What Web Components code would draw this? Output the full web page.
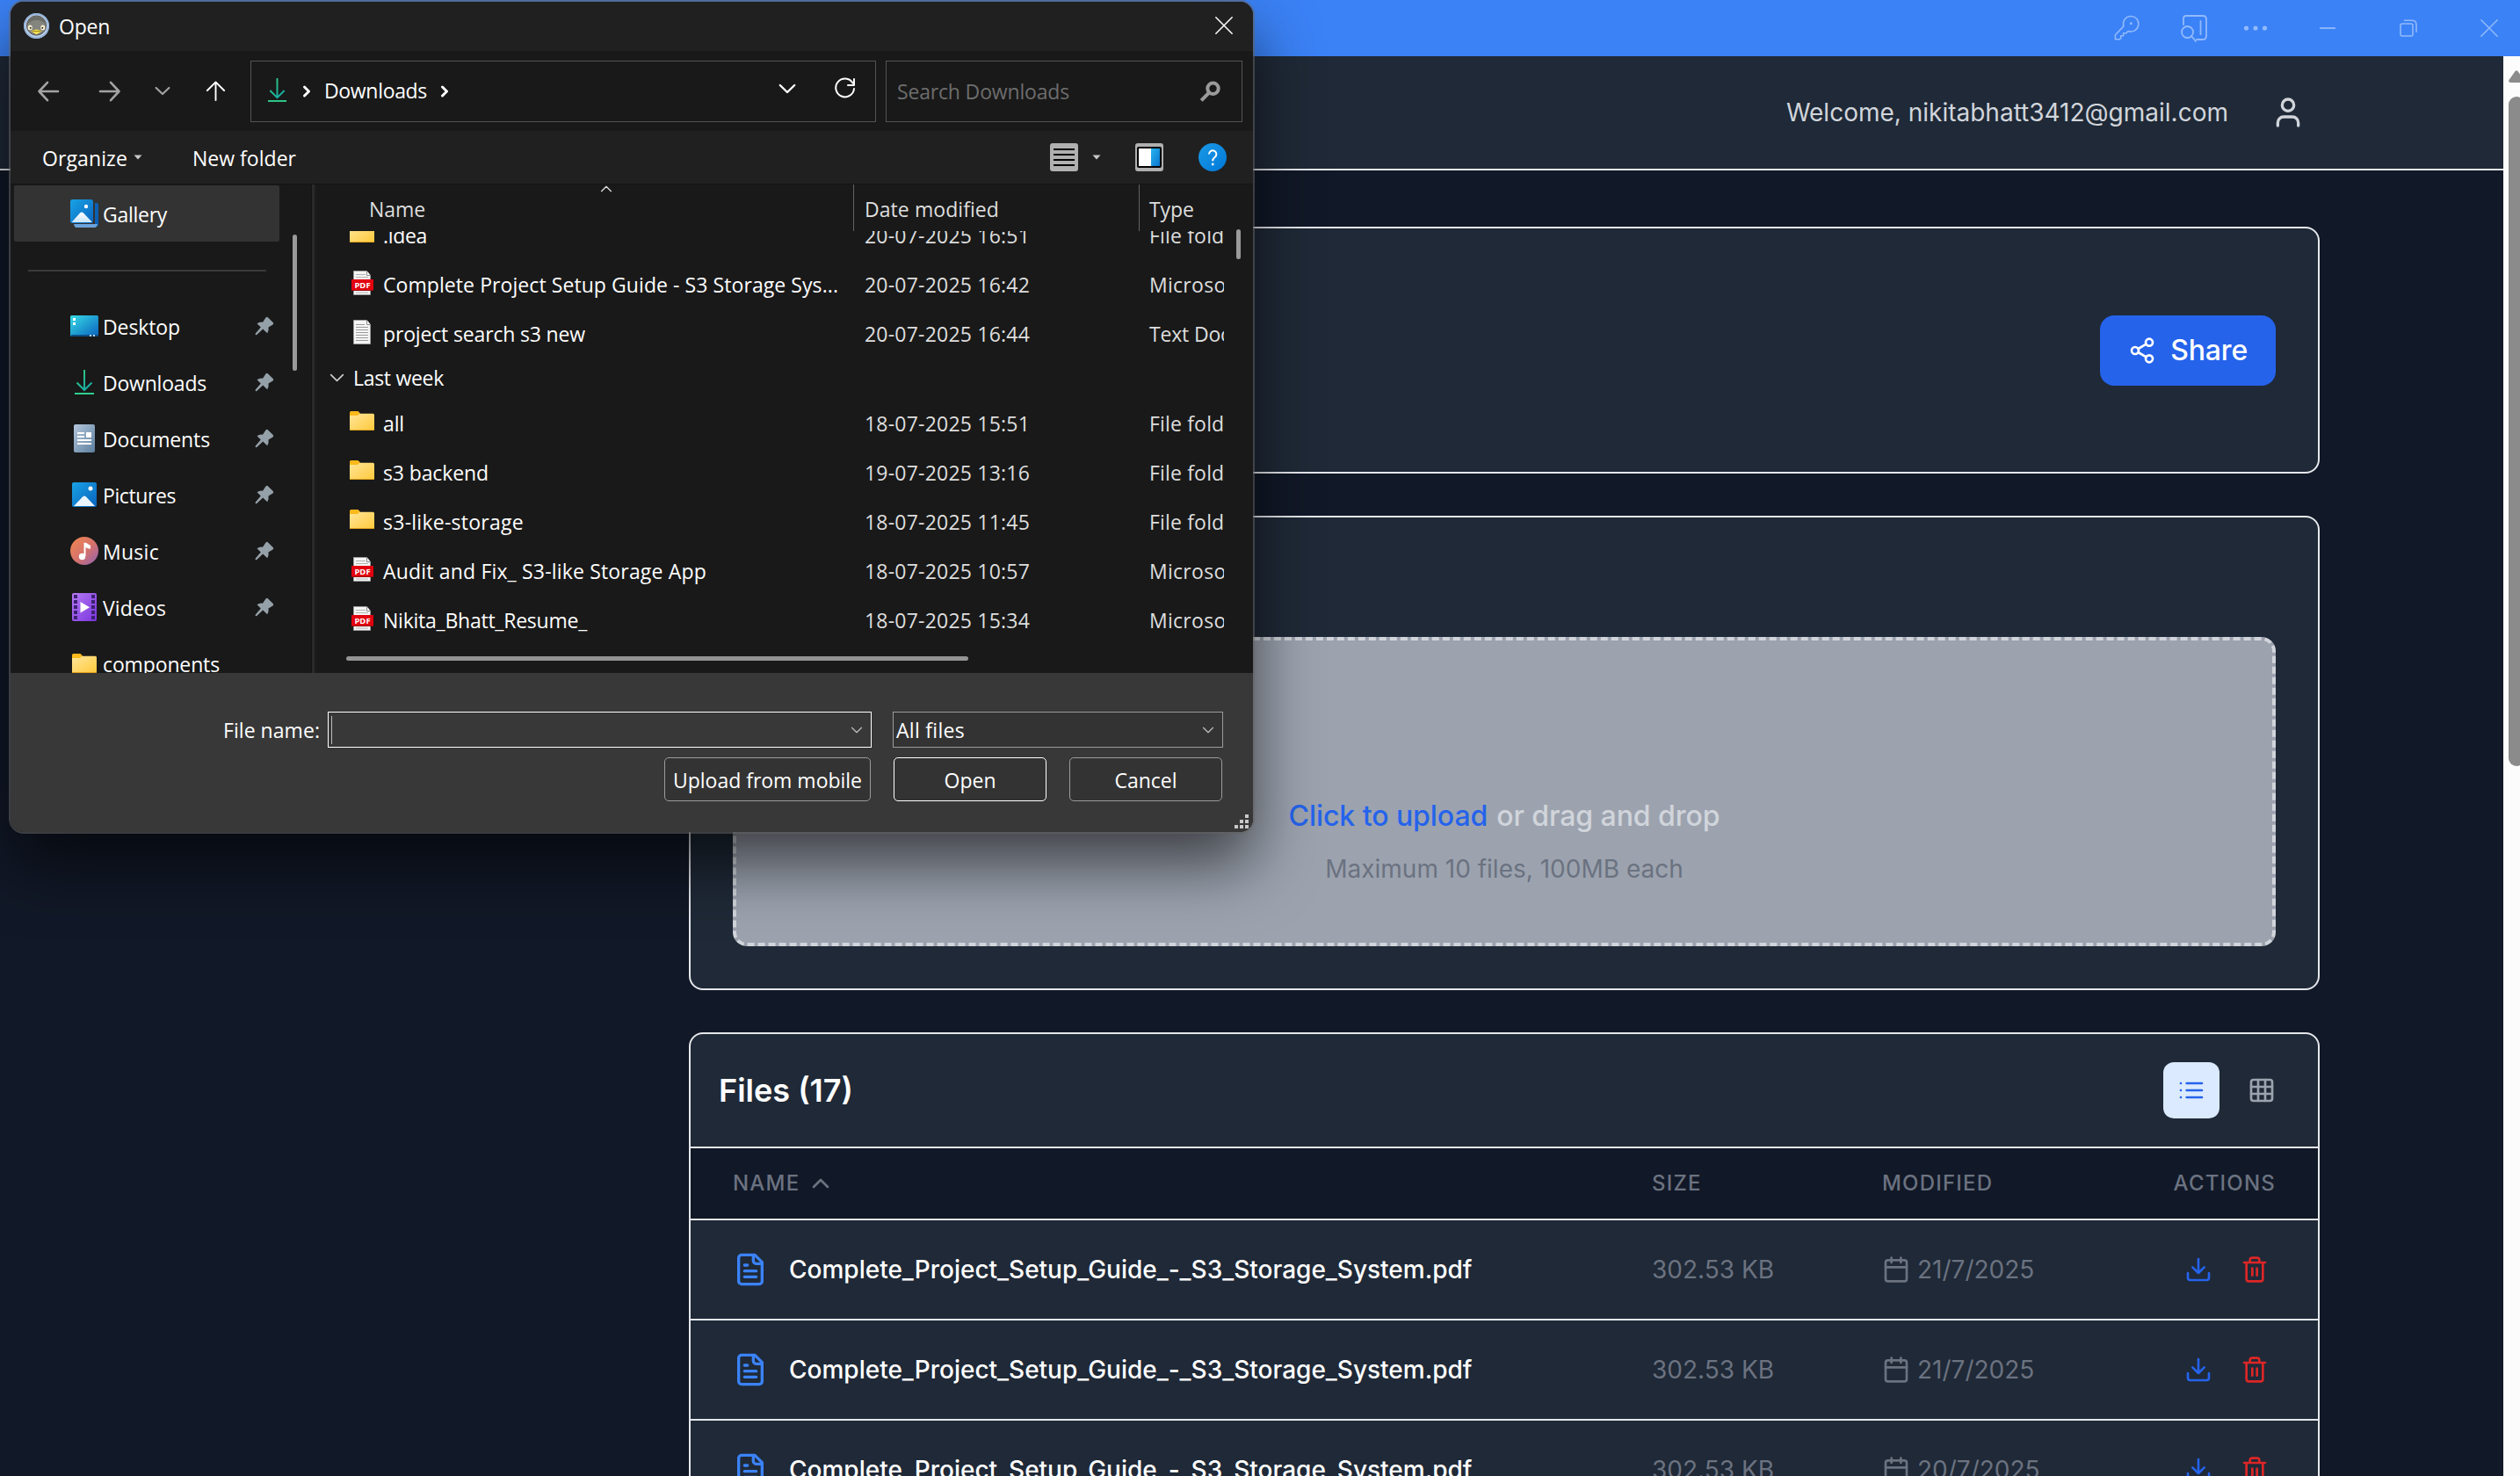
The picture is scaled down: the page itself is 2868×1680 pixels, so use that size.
<!DOCTYPE html>
<html lang="en">
<head>
<meta charset="utf-8">
<title>Storage</title>
<style>
html,body{margin:0;padding:0}
body{width:2868px;height:1680px;overflow:hidden;background:#111827;font-family:Inter,"Liberation Sans",sans-serif;color:#fff}
</style>
</head>
<body>
<storage-app></storage-app>
<open-dialog></open-dialog>
<script>
const define=(name,html,init)=>{
  const t=document.createElement('template');t.innerHTML=html;
  customElements.define(name,class extends HTMLElement{
    constructor(){super();this.attachShadow({mode:'open'}).appendChild(t.content.cloneNode(true));}
    connectedCallback(){if(init)init(this,this.shadowRoot);}
  });
};
const lucide=(body,sw=2)=>({vb:'0 0 24 24',body:`<g fill="none" stroke="currentColor" stroke-width="${sw}" stroke-linecap="round" stroke-linejoin="round">${body}</g>`});
const line=(vb,body,sw)=>({vb,body:`<g fill="none" stroke="currentColor" stroke-width="${sw}" stroke-linecap="round" stroke-linejoin="round">${body}</g>`});
const folder='<defs><linearGradient id="f" x1="0" y1="0" x2="1" y2="1"><stop offset="0" stop-color="#ffe69a"/><stop offset="1" stop-color="#ffc93a"/></linearGradient></defs><path d="M2 6.500q0-1.500 1.500-1.500h8l2.500 2.500v4h-12z" fill="#fbb91b"/><path d="M2 10h9l2.500-2.200H28.500q1.500 0 1.500 1.500V26q0 1-1.500 1h-25q-1.500 0-1.500-1z" fill="url(#f)"/><path d="M2.200 26.500h27.600" stroke="#e2a21c" stroke-width="1"/>';
const page='<path d="M6.500 2.500h15l4 5v22h-19z" fill="#f5f5f5" stroke="#9b9b9b"/><path d="M21.500 2.500v5h4" fill="#fff" stroke="#8a8a8a"/>';
const ICONS={
  user:lucide('<path d="M19 21v-2a4 4 0 0 0-4-4H9a4 4 0 0 0-4 4v2"/><circle cx="12" cy="7" r="4"/>'),
  share:lucide('<circle cx="18" cy="5" r="3"/><circle cx="6" cy="12" r="3"/><circle cx="18" cy="19" r="3"/><path d="M8.590 13.510l6.830 3.980M15.410 6.510l-6.820 3.980"/>'),
  list:lucide('<path d="M3 6h.01M3 12h.01M3 18h.01M8 6h13M8 12h13M8 18h13"/>'),
  grid:lucide('<rect x="3" y="3" width="18" height="18" rx="2"/><path d="M3 9h18M3 15h18M9 3v18M15 3v18"/>'),
  up:lucide('<path d="m18 15-6-6-6 6"/>'),
  file:lucide('<path d="M15 2H6a2 2 0 0 0-2 2v16a2 2 0 0 0 2 2h12a2 2 0 0 0 2-2V7Z"/><path d="M14 2v4a2 2 0 0 0 2 2h4M10 9H8M16 13H8M16 17H8"/>'),
  calendar:lucide('<path d="M8 2v4M16 2v4M3 10h18"/><rect x="3" y="4" width="18" height="18" rx="2"/>'),
  download:lucide('<path d="M21 15v4a2 2 0 0 1-2 2H5a2 2 0 0 1-2-2v-4M7 10l5 5 5-5M12 15V3"/>'),
  trash:lucide('<path d="M3 6h18M19 6v14a2 2 0 0 1-2 2H7a2 2 0 0 1-2-2V6M8 6V4a2 2 0 0 1 2-2h4a2 2 0 0 1 2 2v2M10 11v6M14 11v6"/>'),
  key:line('0 0 32 32','<path d="M3.500 28.500v-5l9.800-10.200a9 9 0 1 1 5.600 5.700l-2.900 2.500h-3v3h-3v3l-1.500 1.200h-4.500z"/><circle cx="22" cy="10" r="1.500" fill="currentColor" stroke="none"/>',1.6),
  tabsearch:line('0 0 32 32','<path d="M4 12V5q0-3 3-3h19q4 0 4 4v19q0 4-4 4h-7M23.500 8v15"/><circle cx="8.500" cy="20.500" r="6.500"/><path d="M13 25l5 6"/>',1.8),
  dots:{vb:'0 0 32 32',body:'<g fill="currentColor"><circle cx="5.500" cy="16" r="2.600"/><circle cx="16" cy="16" r="2.600"/><circle cx="26.500" cy="16" r="2.600"/></g>'},
  min:line('0 0 20 20','<path d="M1 10h18" stroke-linecap="butt"/>',1.8),
  restore:line('0 0 20 20','<rect x="1" y="5" width="14" height="14" rx="2"/><path d="M5.500 1.200H14q5 0 5 5v8"/>',1.6),
  close:line('0 0 20 20','<path d="M.8.8l18.400 18.400M19.200.8L.8 19.200"/>',1.5),
  back:line('0 0 24 24','<path d="M23 12H1.500M11 1.800L1.500 12 11 22.200"/>',2.6),
  fwd:line('0 0 24 24','<path d="M1 12h21.500M13 1.800L22.500 12 13 22.200"/>',2.6),
  chev:line('0 0 20 12','<path d="M1.800 2l8.200 8 8.200-8"/>',2.4),
  thin:line('0 0 20 12','<path d="M1.800 2l8.200 8 8.200-8"/>',2),
  arrowup:line('0 0 24 24','<path d="M12 23V1.500M2 11.500L12 1.500l10 10"/>',2),
  dl:{vb:'0 0 24 30',body:'<defs><linearGradient id="d" gradientUnits="userSpaceOnUse" x1="2" y1="1" x2="20" y2="26"><stop offset="0" stop-color="#33d07e"/><stop offset="1" stop-color="#12a5ab"/></linearGradient></defs><g fill="none" stroke="url(#d)" stroke-width="2"><path d="M12 1v23M3.500 15.500L12 24l8.500-8.500"/></g><path d="M1 28h22" stroke="#2fce8e" stroke-width="2"/>'},
  right:line('0 0 10 14','<path d="M2.500 2l5 5-5 5"/>',3),
  refresh:line('0 0 24 24','<path d="M20.500 5.500A10.400 10.400 0 1 0 22 12M22 1v7h-7"/>',2),
  search:line('0 0 24 24','<circle cx="15.500" cy="8.700" r="6.200"/><path d="M11 13.500L2.200 22.300" stroke-linecap="butt"/>',4),
  caret:{vb:'0 0 10 6',body:'<path d="M.5.500h9l-4.500 5z" fill="#c8c8c8"/>'},
  viewlist:{vb:'0 0 32 32',body:'<rect width="32" height="32" rx="3" fill="#b0b0b0"/><path d="M4 7h24M4 13h24M4 19h24M4 25h24" stroke="#000" stroke-width="2"/>'},
  preview:{vb:'0 0 32 32',body:'<defs><linearGradient id="p" x1="0" y1="0" x2="1" y2="1"><stop offset="0" stop-color="#27b4ef"/><stop offset="1" stop-color="#0a74cf"/></linearGradient></defs><rect width="32" height="32" rx="3" fill="#b0b0b0"/><rect x="2" y="4" width="28" height="24" rx="2" fill="#000"/><path d="M4 6h14v20H4z" fill="#fff"/><path d="M18 6h10v20H18z" fill="url(#p)"/>'},
  help:{vb:'0 0 32 32',body:'<defs><linearGradient id="h" x1="0" y1="0" x2="1" y2="1"><stop offset="0" stop-color="#1c9ae6"/><stop offset="1" stop-color="#0078d8"/></linearGradient></defs><circle cx="16" cy="16" r="16" fill="url(#h)"/><path d="M12 12.500a4.200 4.200 0 1 1 6.500 3.500q-2.300 1.700-2.300 4.200" fill="none" stroke="#fff" stroke-width="2"/><circle cx="16.200" cy="24" r="1.400" fill="#fff"/>'},
  app:{vb:'0 0 32 32',body:'<circle cx="16" cy="16" r="15" fill="#bcd2ec"/><circle cx="16" cy="16" r="14" fill="none" stroke="#8fb0d8" stroke-width="1.500"/><circle cx="16" cy="15.500" r="11.500" fill="#85857f" stroke="#555" stroke-width="1"/><path d="M6 13q10-8 20 0v-3q-10-10-20 0z" fill="#6c6c67"/><ellipse cx="8.500" cy="18" rx="2.600" ry="3" fill="#f6efcf"/><ellipse cx="23.500" cy="18" rx="2.600" ry="3" fill="#f6efcf"/><circle cx="9" cy="18.300" r="1" fill="#222"/><circle cx="23" cy="18.300" r="1" fill="#222"/><path d="M9.500 22q3.500-1.500 6.500-2 3 .5 6.500 2-3 2-6.500 4-3.500-2-6.500-4z" fill="#f3e04c"/><path d="M11 22.200h10" stroke="#8a7410" stroke-width=".8"/>'},
  gallery:{vb:'0 0 32 32',body:'<defs><linearGradient id="g" x1="0" y1="0" x2="1" y2="1"><stop offset="0" stop-color="#18a2e4"/><stop offset="1" stop-color="#0b66c0"/></linearGradient><linearGradient id="m" x1="0" y1="0" x2="0" y2="1"><stop offset="0" stop-color="#fff"/><stop offset="1" stop-color="#c9e6fb"/></linearGradient></defs><path d="M28 4h2q2 0 2 2v22q0 3-3 3h-1z" fill="#0c5fb4"/><path d="M4 28h27q-1 4-3 4H6.500q-1.500 0-2.500-4z" fill="#6aa3dc"/><rect width="26" height="27" rx="2.500" fill="url(#g)"/><path d="M1.500 26L11 15.500q2-2 4 0L25 26z" fill="url(#m)"/><circle cx="18" cy="8" r="2.200" fill="#fff"/>'},
  desktop:{vb:'0 0 32 32',body:'<defs><linearGradient id="k" x1="0" y1="0" x2="1" y2="1"><stop offset="0" stop-color="#37dbe6"/><stop offset="1" stop-color="#0a62bd"/></linearGradient></defs><rect y="4" width="32" height="24" rx="1.500" fill="url(#k)"/><path d="M1 26h31v1q0 1-1 1H1z" fill="#0b4f86"/><path d="M3 7h3v3H3zM3 12h3v3H3z" fill="#fff"/><path d="M22 26h2v2h-2zM26 26h2v2h-2z" fill="#b9d5ee"/>'},
  downloads:{vb:'-4 -1 32 32',body:''},
  documents:{vb:'0 0 32 32',body:'<defs><linearGradient id="o" x1="0" y1="0" x2="1" y2="1"><stop offset="0" stop-color="#b4c7dc"/><stop offset="1" stop-color="#5d7f9f"/></linearGradient></defs><rect x="4" width="24" height="32" rx="2" fill="url(#o)"/><path d="M8 9h8v2H8zM8 13h8v2H8zM18 9h6v6h-6zM8 17h16v2H8zM8 21h16v2H8z" fill="#fff"/>'},
  pictures:{vb:'0 0 32 32',body:'<defs><linearGradient id="q" x1="0" y1="0" x2="1" y2="1"><stop offset="0" stop-color="#18a2e4"/><stop offset="1" stop-color="#0a62bd"/></linearGradient></defs><rect x="2" y="2" width="28" height="28" rx="2" fill="url(#q)"/><path d="M4 29L14 18.500q2-2 4 0L28 29z" fill="#eaf5fd"/><circle cx="23" cy="9" r="2.500" fill="#fff"/>'},
  music:{vb:'0 0 32 32',body:'<defs><linearGradient id="u" x1="0" y1="0" x2="1" y2="1"><stop offset="0" stop-color="#f2884f"/><stop offset=".55" stop-color="#d4716d"/><stop offset="1" stop-color="#8f62b8"/></linearGradient></defs><circle cx="16" cy="16" r="16" fill="url(#u)"/><circle cx="13.500" cy="22.500" r="3.700" fill="#fff"/><path d="M15.500 22V6.500q3 0 4.500 1.500t3 1.800v4q-3 0-5.500-1.800V22z" fill="#fff"/>'},
  videos:{vb:'0 0 32 32',body:'<defs><linearGradient id="v" x1="0" y1="0" x2="1" y2="1"><stop offset="0" stop-color="#b579f4"/><stop offset="1" stop-color="#7a35dd"/></linearGradient></defs><rect x="2" width="28" height="32" rx="2" fill="url(#v)"/><path d="M4 2h4v4H4zM4 8h4v4H4zM4 14h4v4H4zM4 20h4v4H4zM4 26h4v4H4zM24 2h4v4h-4zM24 8h4v4h-4zM24 14h4v4h-4zM24 20h4v4h-4zM24 26h4v4h-4z" fill="#3d2170"/><path d="M11.500 10v12.500L22 16.200z" fill="#fff"/>'},
  folder:{vb:'0 0 32 32',body:folder},
  pdf:{vb:'0 0 32 32',body:page+'<path d="M9 6.500h11M9 9.500h14M9 27h14" stroke="#b4b4b4"/><rect x="4" y="12" width="25" height="13" fill="#e2000f"/><path d="M4 24.500h25" stroke="#9c0a10"/><text x="16.500" y="22" text-anchor="middle" font-family="Open Sans,sans-serif" font-weight="700" font-size="9.500" fill="#fff">PDF</text>'},
  txt:{vb:'0 0 32 32',body:page+'<path d="M9 7.500h10M9 10.500h14M9 13.500h14M9 16.500h14M9 19.500h14M9 22.500h14M9 25.500h14" stroke="#9a9a9a"/>'},
  pin:{vb:'0 0 22 22',body:'<path d="M12.500 1.500q1.300-1.300 2.600 0l5.600 5.600q1.300 1.300-.2 2.500l-5 3q.8 3.600-1.300 6.600l-5-4.800L2 21.200 .6 21l.2-1.600 6-6.800L2.500 8.200q3.200-2.200 6.500-1.500z" fill="#95a1a9"/>'}
};
ICONS.downloads.body=ICONS.dl.body;
define('ui-icon','<style>:host{display:block;flex:none}svg{display:block;width:100%;height:100%;overflow:visible}</style><svg></svg>',(el,r)=>{
  const i=ICONS[el.getAttribute('name')],s=r.querySelector('svg');
  el.style.width=el.getAttribute('w')+'px';el.style.height=(el.getAttribute('h')||el.getAttribute('w'))+'px';
  s.setAttribute('viewBox',i.vb);s.innerHTML=i.body;
});
/* Text that tracks itself to a preferred width */
define('fit-text','<style>:host{display:block;flex:none;white-space:nowrap}span{display:inline-block;white-space:pre}</style><span></span>',(el,r)=>{
  const s=r.querySelector('span');s.textContent=el.getAttribute('text');
  const w=+el.getAttribute('w');if(!w)return;
  const n=s.textContent.length,nat=s.getBoundingClientRect().width;
  if(nat){s.style.letterSpacing=((w-nat)/n).toFixed(3)+'px';}
});

define('title-bar',`<style>:host{display:flex;flex:none;height:64px;background:#3b82f6;color:#92bafb;align-items:center;justify-content:flex-end;box-sizing:border-box;padding-right:25px}
.a{margin-right:46px}.b{margin-right:38px}.c{margin-right:56px}.d{margin-right:72px}</style>
<ui-icon class="a" name="key" w="31"></ui-icon><ui-icon class="b" name="tabsearch" w="32"></ui-icon><ui-icon class="c" name="dots" w="32"></ui-icon><ui-icon class="d" name="min" w="20"></ui-icon><ui-icon class="d" name="restore" w="20"></ui-icon><ui-icon name="close" w="20"></ui-icon>`);
define('app-header',`<style>:host{display:flex;flex:none;height:128px;background:#1f2937;border-bottom:2px solid #e5e7eb;align-items:center;justify-content:flex-end;gap:48px;padding-right:225px;color:#d1d5db;font-size:28px}</style>
<fit-text text="Welcome, nikitabhatt3412@gmail.com"></fit-text><ui-icon name="user" w="40"></ui-icon>`);
define('surface-card',`<style>:host{display:flex;flex-direction:column;box-sizing:border-box;width:1856px;border:2px solid #e5e7eb;border-radius:16px;background:#1f2937;overflow:hidden;flex:none}</style><slot></slot>`);
define('share-button',`<style>:host{display:flex;align-items:center;gap:16px;height:80px;padding:0 32px;border-radius:16px;background:#2563eb;color:#fff;font-size:32px;font-weight:500;letter-spacing:-.2px}</style><ui-icon name="share" w="32"></ui-icon><slot></slot>`);
define('upload-zone',`<style>:host{display:flex;flex-direction:column;justify-content:flex-end;align-items:center;box-sizing:border-box;height:352px;border:4px dashed #d1d5db;border-radius:16px;background:#9ca3af;padding-bottom:64px}
.t{display:flex;font-size:32px;line-height:48px;color:#d1d5db;margin-bottom:16px;gap:10px;font-weight:500;letter-spacing:-.06px}.t b{font-weight:500;color:#2563eb}.s{font-size:28px;line-height:40px;color:#6b7280}</style>
<div class="t"><b>Click to upload</b><span>or drag and drop</span></div><div class="s">Maximum 10 files, 100MB each</div>`);
define('file-row',`<style>:host{display:grid;grid-template-columns:1046px 262px 1fr auto;align-items:center;height:112px;padding:0 48px;border-bottom:2px solid #e5e7eb;font-size:28px;color:#6b7280}
.n{display:flex;align-items:center;gap:24px;color:#fff;font-weight:500}.n ui-icon{color:#3b82f6}.m{display:flex;align-items:center;gap:8px}.x{display:flex;gap:32px;padding:0 8px}</style>
<div class="n"><ui-icon name="file" w="40"></ui-icon><slot name="name"></slot></div><slot name="size"></slot><div class="m"><ui-icon name="calendar" w="32"></ui-icon><slot name="date"></slot></div><div class="x"><ui-icon name="download" w="32" style="color:#2563eb"></ui-icon><ui-icon name="trash" w="32" style="color:#dc2626"></ui-icon></div>`);
define('file-table',`<style>:host{display:block}
.h{display:flex;align-items:center;height:128px;padding:0 32px;border-bottom:2px solid #e5e7eb;gap:16px}.h h3{margin:0 auto 0 0;font-size:36px;font-weight:600}
.b{display:flex;width:64px;height:64px;align-items:center;justify-content:center;border-radius:12px;color:#9ca3af}.on{background:#dbeafe;color:#2563eb}
.th{display:grid;grid-template-columns:1046px 262px 1fr auto;align-items:center;height:80px;padding:0 48px;background:#111827;border-bottom:2px solid #e5e7eb;color:#6b7280;font-size:24px;font-weight:500;letter-spacing:1.2px;line-height:32px}
.th div{display:flex;gap:8px;align-items:center}</style>
<div class="h"><h3>Files (17)</h3><div class="b on"><ui-icon name="list" w="32"></ui-icon></div><div class="b"><ui-icon name="grid" w="32"></ui-icon></div></div>
<div class="th"><div>NAME<ui-icon name="up" w="32"></ui-icon></div><span>SIZE</span><span>MODIFIED</span><span>ACTIONS</span></div><div id="rows"></div>`,(el,r)=>{
  r.querySelector('#rows').innerHTML=['21/7/2025','21/7/2025','20/7/2025'].map(d=>`<file-row><span slot="name">Complete_Project_Setup_Guide_-_S3_Storage_System.pdf</span><span slot="size">302.53 KB</span><span slot="date">${d}</span></file-row>`).join('');
});
define('page-scrollbar',`<style>:host{display:flex;flex-direction:column;width:19px;background:#fcfcfc;flex:none;overflow:hidden;padding-top:16px;box-sizing:border-box}svg{display:block;margin-left:6px;flex:none}.t{margin:16px 0 0 6px;width:18px;height:762px;border-radius:9px;background:#8b8b8b;flex:none}</style>
<svg width="18" height="14"><path d="M7.500 1q1.500-1.500 3 0l7 10q1 3-2 3h-13q-3 0-2-3z" fill="#8b8b8b"/></svg><div class="t"></div>`);
define('storage-app',`<style>:host{display:flex;flex-direction:column;width:2868px;height:1680px;overflow:hidden}
.w{display:flex;flex:1;min-height:0}.p{flex:1;display:flex;flex-direction:column;background:#111827;overflow:hidden}
main{display:flex;flex:none;flex-direction:column;gap:48px;padding:64px 0 0 784px}
.s{height:277px;display:flex;align-items:center;justify-content:flex-end;padding-right:48px}.u{height:536px;display:flex;flex-direction:column;justify-content:flex-end;box-sizing:border-box;padding:0 48px 48px}.f{height:700px}</style>
<title-bar></title-bar><div class="w"><div class="p"><app-header></app-header><main>
<surface-card><div class="s"><share-button>Share</share-button></div></surface-card>
<surface-card><div class="u"><upload-zone></upload-zone></div></surface-card>
<surface-card><div class="f"><file-table></file-table></div></surface-card></main></div><page-scrollbar></page-scrollbar></div>`);

/* File picker */
define('side-item',`<style>:host{display:flex;align-items:center;box-sizing:border-box;width:302px;height:64px;padding:0 6px 0 64px;gap:5px;flex:none}:host([on]){background:#333;border-radius:2px}.i{margin-bottom:2px}:host([on]) .i{margin:0}:host([on]) fit-text{padding-top:1px}.p{margin:0 0 2px auto}</style>`,(el,r)=>{
  r.innerHTML+=`<ui-icon class="i" name="${el.getAttribute('icon')}" w="32"></ui-icon><fit-text text="${el.getAttribute('label')}" w="${el.getAttribute('w')}"></fit-text>`+(el.hasAttribute('pin')?'<ui-icon class="p" name="pin" w="22"></ui-icon>':'');
});
define('dir-row',`<style>:host{display:grid;grid-template-columns:624px 324px auto;height:56px;align-items:center;color:#dedede;width:1033px;overflow:hidden}.n{display:flex;align-items:center;gap:8px;padding-left:36px;color:#fff}</style>`,(el,r)=>{
  const g=k=>el.getAttribute(k),off=g('icon')=='folder'?'6px':'4px';
  r.innerHTML+=`<div class="n"><ui-icon name="${g('icon')}" w="32" style="margin-bottom:${off}"></ui-icon><fit-text text="${g('label')}" w="${g('w')}"></fit-text></div><fit-text text="${g('date')}" w="188"></fit-text><fit-text text="${g('type')}" w="${g('tw')}"></fit-text>`;
});
define('dialog-button',`<style>:host{display:flex;align-items:center;justify-content:center;box-sizing:border-box;height:50px;border:1px solid #9b9b9b;border-radius:5px;background:#333;padding-top:1px}:host([primary]){border-color:#fff}</style><slot></slot>`);
define('open-dialog',`<style>
:host{position:absolute;left:12px;top:2px;width:1414px;height:945px;display:flex;flex-direction:column;border-radius:15px;background:#191919;color:#fff;font:23px "Open Sans","Noto Sans",sans-serif;box-shadow:0 0 0 2px rgba(100,100,100,.55),0 36px 72px rgba(0,0,0,.62)}
.bar{display:flex;align-items:center;flex:none;box-sizing:border-box}
.title{height:56px;background:#202020;border-radius:15px 15px 0 0;padding:0 23px 2px 14px;gap:11px}
.title ui-icon:last-child{margin-left:auto}
.nav{height:91px;padding:0 12px 0 31px;color:#fff}.dim{color:#a3a3a3}
.box{display:flex;align-items:center;box-sizing:border-box;height:70px;border:1px solid #535353}
.addr{width:712px;padding:0 22px 0 18px;margin-left:28px}
.srch{width:406px;margin-left:auto;padding:1px 24px 0 12px;justify-content:space-between;color:#6d6d6d}
.tools{height:61px;background:#202020;border-bottom:1px solid #141414;padding:0 30px 0 36px}.tools fit-text{padding-top:2px}
.body{display:flex;height:556px;flex:none;overflow:hidden}
.side{width:306px;padding:1px 0 0 4px;box-sizing:border-box;overflow:hidden}
.sep{height:65px;display:flex;align-items:center;padding-left:16px}.sep i{width:271px;height:2px;background:#3a3a3a}
.gut{width:36px;box-sizing:border-box;padding:57px 0 0 15px}.gut i{display:block;width:5px;height:155px;border-radius:3px;background:#9a9a9a}
.split{width:6px;background:#1c1c1c;border-left:1px solid #131313;box-sizing:border-box}.split i{display:block;width:3px;height:100%;background:#2a2a2a}
.pane{width:1033px;display:flex;flex-direction:column}
.cols{display:flex;height:53px;flex:none;color:#dedede}.cols>div{box-sizing:border-box;padding-top:3px;display:flex;align-items:center}
.cols>div+div{border-left:1px solid #636363}
.rows{height:469px;overflow:hidden}.rows dir-row:first-child{margin-top:-23px}
.grp{display:flex;align-items:center;height:46px;box-sizing:border-box;padding:0 0 2px 15px;gap:10px}
.hs{padding:15px 0 0 34px}.hs i{display:block;width:708px;height:5px;border-radius:3px;background:#949494}
.vs{padding:51px 0 0 14px}.vs i{display:block;width:5px;height:34px;border-radius:3px;background:#9a9a9a}
.foot{flex:1;background:#383838;border-radius:0 0 15px 15px;display:flex;flex-direction:column;gap:11px;padding:44px 34px 0 0}
.r{display:flex;justify-content:flex-end;align-items:center}.r+.r{padding-right:1px}
.in{display:flex;align-items:center;box-sizing:border-box;height:41px}
.grip{position:absolute;right:5px;bottom:4px;display:grid;grid-template-columns:4px 4px 4px;gap:2px;direction:rtl}.grip i{width:4px;height:4px;background:#c9c9c9}
</style>
<div class="bar title"><ui-icon name="app" w="31"></ui-icon><fit-text text="Open" w="58" style="margin-left:-1px;padding-top:1px"></fit-text><ui-icon name="close" w="20"></ui-icon></div>
<div class="bar nav"><ui-icon class="dim" name="back" w="24"></ui-icon><ui-icon class="dim" name="fwd" w="24" style="margin-left:46px"></ui-icon><ui-icon class="dim" name="chev" w="18" h="11" style="margin-left:39px"></ui-icon><ui-icon name="arrowup" w="23" style="margin-left:40px"></ui-icon>
<div class="box addr"><ui-icon name="dl" w="23" h="29" style="margin-bottom:2px"></ui-icon><ui-icon name="right" w="10" h="14" style="margin-left:17px"></ui-icon><fit-text text="Downloads" w="117" style="margin-left:15px;padding-bottom:1px"></fit-text><ui-icon name="right" w="10" h="14" style="margin-left:15px"></ui-icon><ui-icon name="chev" w="20" h="12" style="margin:0 44px 6px auto"></ui-icon><ui-icon name="refresh" w="24" style="margin-bottom:6px"></ui-icon></div>
<div class="box srch"><fit-text text="Search Downloads" w="196"></fit-text><ui-icon name="search" w="24" style="color:#9a9a9a"></ui-icon></div></div>
<div class="bar tools"><fit-text text="Organize" w="97"></fit-text><ui-icon name="caret" w="10" h="6" style="margin-left:7px"></ui-icon><fit-text text="New folder" w="118" style="margin-left:57px"></fit-text><ui-icon name="viewlist" w="32" style="margin-left:auto"></ui-icon><ui-icon name="caret" w="10" h="6" style="margin-left:16px"></ui-icon><ui-icon name="preview" w="32" style="margin-left:39px"></ui-icon><ui-icon name="help" w="32" style="margin-left:40px"></ui-icon></div>
<div class="body">
<div class="side"><side-item on icon="gallery" label="Gallery" w="73"></side-item><div class="sep"><i></i></div>
<side-item pin icon="desktop" label="Desktop" w="88"></side-item><side-item pin icon="downloads" label="Downloads" w="118"></side-item><side-item pin icon="documents" label="Documents" w="122"></side-item><side-item pin icon="pictures" label="Pictures" w="83"></side-item><side-item pin icon="music" label="Music" w="64"></side-item><side-item pin icon="videos" label="Videos" w="72"></side-item><side-item icon="folder" label="components" w="133"></side-item></div>
<div class="gut"><i></i></div><div class="split"><i></i></div>
<div class="pane"><div class="cols"><div style="width:611px;padding-left:60px"><fit-text text="Name" w="64"></fit-text><ui-icon name="thin" w="14" h="8" style="transform:rotate(180deg);margin:0 0 46px 199px"></ui-icon></div><div style="width:325px;padding-left:12px"><fit-text text="Date modified" w="153"></fit-text></div><div style="flex:1;padding-left:11px"><fit-text text="Type" w="51"></fit-text></div></div>
<div class="rows">
<dir-row icon="folder" label=".idea" w="50" date="20-07-2025 16:51" type="File folder" tw="108"></dir-row>
<dir-row icon="pdf" label="Complete Project Setup Guide - S3 Storage Sys..." w="518" date="20-07-2025 16:42" type="Microsoft" tw="104"></dir-row>
<dir-row icon="txt" label="project search s3 new" w="230" date="20-07-2025 16:44" type="Text Docum" tw="127"></dir-row>
<div class="grp"><ui-icon name="thin" w="17" h="10" style="color:#ccc"></ui-icon><fit-text text="Last week" w="103"></fit-text></div>
<dir-row icon="folder" label="all" w="24" date="18-07-2025 15:51" type="File folder" tw="108"></dir-row>
<dir-row icon="folder" label="s3 backend" w="120" date="19-07-2025 13:16" type="File folder" tw="108"></dir-row>
<dir-row icon="folder" label="s3-like-storage" w="160" date="18-07-2025 11:45" type="File folder" tw="108"></dir-row>
<dir-row icon="pdf" label="Audit and Fix_ S3-like Storage App" w="368" date="18-07-2025 10:57" type="Microsoft" tw="104"></dir-row>
<dir-row icon="pdf" label="Nikita_Bhatt_Resume_" w="232" date="18-07-2025 15:34" type="Microsoft" tw="104"></dir-row>
</div><div class="hs"><i></i></div></div><div class="vs"><i></i></div></div>
<div class="foot"><div class="r"><fit-text text="File name:" w="110"></fit-text><div class="in" style="width:619px;border:1px solid #fff;margin:0 24px 0 9px;padding:0 9px 0 3px;justify-content:space-between"><i style="width:1px;height:32px;background:#bbb"></i><ui-icon name="thin" w="14" h="8" style="color:#bbb"></ui-icon></div><div class="in" style="width:376px;border:1px solid #9b9b9b;background:#333;padding:0 9px 0 3px;justify-content:space-between"><fit-text text="All files" w="78"></fit-text><ui-icon name="thin" w="14" h="8" style="color:#bbb"></ui-icon></div></div>
<div class="r"><dialog-button style="width:235px;margin-right:26px"><fit-text text="Upload from mobile" w="215"></fit-text></dialog-button><dialog-button primary style="width:174px;margin-right:26px"><fit-text text="Open" w="59"></fit-text></dialog-button><dialog-button style="width:174px"><fit-text text="Cancel" w="71"></fit-text></dialog-button></div></div>
<div class="grip"><i></i><b></b><b></b><i></i><i></i><b></b><i></i><i></i><i></i></div>`);
</script>
</body>
</html>
